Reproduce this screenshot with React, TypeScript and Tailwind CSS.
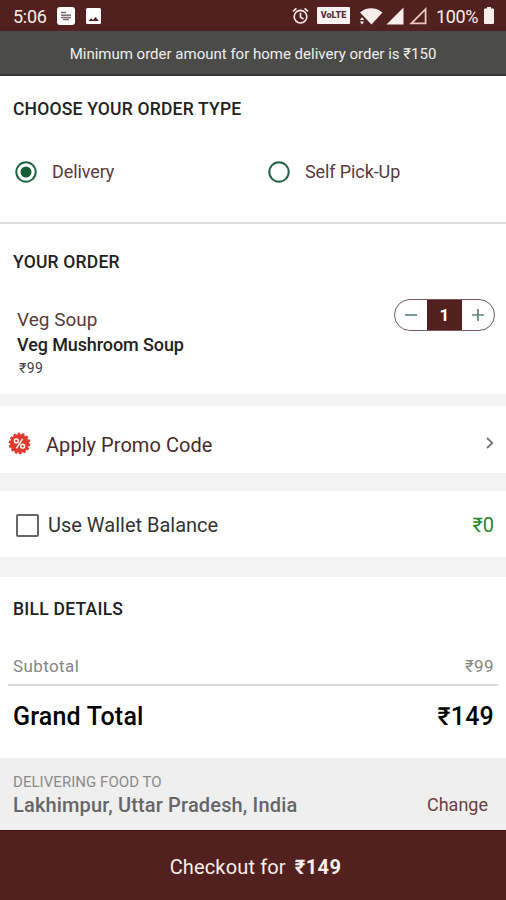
import React, { useState } from "react";

const OrderScreen: React.FunctionComponent = () => {
  return (
    <main className="flex h-[900px] w-[506px] flex-col overflow-hidden bg-[#f3f3f3] font-['Roboto',sans-serif] text-[#222]">
      <StatusBar />
      <div className="flex h-[45px] shrink-0 items-center justify-center border-b-2 border-[#353533] bg-[#4b4b49] pt-[4px] text-[15px] text-[#efefed]">
        Minimum order amount for home delivery order is ₹150
      </div>
      <OrderType />
      <OrderItems />
      <PromoRow />
      <WalletRow />
      <BillDetails />
      <Address />
      <button className="flex h-[70px] w-full shrink-0 items-center justify-center gap-[9px] border-t border-[#3c1210] bg-[#52201e] pt-[2px] pl-[5px] text-[20px] text-[#f8efeb]">
        <span className="tracking-[0.15px]">Checkout for</span>
        <span className="font-bold tracking-[0.4px]">₹149</span>
      </button>
    </main>
  );
};

export default OrderScreen;

const StatusBar: React.FunctionComponent = () => {
  return (
    <header className="flex h-[31px] shrink-0 items-center bg-[#52201e] pr-[12px] pl-[13px] text-[#f7eeeb]">
      <span className="w-[44px] pt-px text-[18px] tracking-[-0.3px]">5:06</span>
      <svg className="h-[18px] w-[18px]" viewBox="0 0 18 18">
        <rect width="18" height="18" rx="3" fill="#fff" />
        <path
          d="M4 5.5h5M4 8.2h10M4 10.5h10M6 12.4h6"
          stroke="#7e6c70"
          strokeWidth="1.5"
        />
      </svg>
      <svg className="ml-[11px] h-[16px] w-[15px]" viewBox="0 0 15 16">
        <rect width="15" height="16" rx="1.5" fill="#fff" />
        <path d="M2.5 13 5 10.3l2 1.7 2.6-3 3.2 4Z" fill="#52201e" />
      </svg>

      <div className="ml-auto flex items-center">
        <svg
          className="h-[18px] w-[17px]"
          viewBox="0 0 17 18"
          fill="none"
          stroke="currentColor"
          strokeWidth="1.6"
        >
          <circle cx="8.5" cy="9.7" r="6.3" />
          <path d="M8.5 5.8v4.3l3 1.9M1 4.3l3.4-2.9M16 4.3l-3.4-2.9" />
        </svg>
        <span className="ml-[8px] flex h-[17px] w-[33px] items-center justify-center rounded-[1px] bg-[#fbf4f2] text-[9px] font-black text-[#52303a]">
          VoLTE
        </span>
        <svg
          className="ml-[9px] h-[18px] w-[24px]"
          viewBox="0 0 24 18"
          fill="currentColor"
        >
          <path d="M1 5.5C7-.3 17-.3 23.5 5.5L12.5 17.5Z" />
          <path d="m3 10.3 2.2 2.7H.8ZM3 17.5.8 14.4h4.4Z" />
        </svg>
        <svg
          className="ml-[3px] h-[18px] w-[18px]"
          viewBox="0 0 18 18"
          fill="currentColor"
        >
          <path d="M17.5.5v17H.5Z" />
        </svg>
        <svg
          className="ml-[5px] h-[18px] w-[18px]"
          viewBox="0 0 18 18"
          fill="none"
          stroke="#e7c9bd"
          strokeWidth="1.8"
        >
          <path d="M16.6 2.2v14.2H2.4Z" />
        </svg>
        <span className="ml-[9px] w-[48px] pt-px text-[18px] tracking-[-0.4px]">
          100%
        </span>
        <svg
          className="h-[17px] w-[10px]"
          viewBox="0 0 10 17"
          fill="currentColor"
        >
          <path d="M3 0h4v1.6h2a1 1 0 0 1 1 1V16a1 1 0 0 1-1 1H1a1 1 0 0 1-1-1V2.600a1 1 0 0 1 1-1h2Z" />
        </svg>
      </div>
    </header>
  );
};

const OrderType: React.FunctionComponent = () => {
  const [type, setType] = useState("Delivery");

  return (
    <section className="h-[148px] shrink-0 border-b-2 border-[#dcdcdc] bg-white px-[13px] pt-[21px]">
      <h2 className="text-[17.5px] leading-6 font-medium tracking-[0.2px]">
        CHOOSE YOUR ORDER TYPE
      </h2>
      <div className="mt-[39px] flex">
        {["Delivery", "Self Pick-Up"].map((name) => (
          <button
            key={name}
            className="flex w-[253px] shrink-0 items-center gap-[15px] pl-[2px] text-left"
            onClick={() => setType(name)}
          >
            <svg className="h-[22px] w-[22px] shrink-0" viewBox="0 0 22 22">
              <circle
                cx="11"
                cy="11"
                r="9.7"
                fill="none"
                stroke="#236342"
                strokeWidth="2"
              />
              {type === name && <circle cx="11" cy="11" r="5.5" fill="#175c35" />}
            </svg>
            <span className="text-[18px] leading-6 tracking-[-0.1px] whitespace-nowrap text-[#5b3a3c]">
              {name}
            </span>
          </button>
        ))}
      </div>
    </section>
  );
};

const OrderItems: React.FunctionComponent = () => {
  const [count, setCount] = useState(1);

  return (
    <section className="h-[170px] shrink-0 bg-white pt-[26px] pr-[11px] pl-[13px]">
      <h2 className="text-[17.5px] leading-6 font-medium tracking-[0.2px]">
        YOUR ORDER
      </h2>
      <div className="mt-[25px] flex justify-between">
        <div className="pt-[9px] pl-[4px]">
          <p className="text-[19px] leading-6 text-[#5b3a3c]">Veg Soup</p>
          <p className="text-[18px] leading-[26px] font-medium tracking-[-0.1px]">
            Veg Mushroom Soup
          </p>
          <p className="pl-[2px] text-[14px] leading-5 tracking-[0.4px] text-[#444]">
            ₹99
          </p>
        </div>
        <div className="flex h-[32px] w-[101px] overflow-hidden rounded-full border border-[#765a5b]">
          <button
            title="Remove"
            className="flex flex-1 items-center justify-center"
            onClick={() => setCount(Math.max(0, count - 1))}
          >
            <svg className="h-3 w-3" viewBox="0 0 12 12">
              <path d="M0 6h12" stroke="#759b8b" strokeWidth="2" />
            </svg>
          </button>
          <span className="flex w-[35px] items-center justify-center bg-[#52201e] pt-px text-[17px] font-bold text-white">
            {count}
          </span>
          <button
            title="Add"
            className="flex flex-1 items-center justify-center"
            onClick={() => setCount(count + 1)}
          >
            <svg className="h-3 w-3" viewBox="0 0 12 12">
              <path d="M0 6h12M6 0v12" stroke="#5c8776" strokeWidth="1.7" />
            </svg>
          </button>
        </div>
      </div>
    </section>
  );
};

const PromoRow: React.FunctionComponent = () => {
  return (
    <section className="mt-[12px] flex h-[67px] shrink-0 items-center bg-white pt-[10px] pr-[12px] pl-[8px]">
      <svg className="mb-[3px] h-[23px] w-[23px]" viewBox="0 0 24 24">
        <circle
          cx="12"
          cy="12"
          r="10"
          fill="#e13b2d"
          stroke="#e13b2d"
          strokeWidth="2.6"
          strokeDasharray="2.6 1.89"
        />
        <g fill="none" stroke="#fff" strokeWidth="1.5">
          <circle cx="8.700" cy="9.3" r="2" />
          <circle cx="15.3" cy="14.8" r="2" />
          <path d="M15.3 7.2 8.7 17" />
        </g>
      </svg>
      <span className="ml-[15px] text-[20px] leading-6 tracking-[0.05px] text-[#4a292b]">
        Apply Promo Code
      </span>
      <svg
        className="mb-[3px] ml-auto h-[12px] w-[8px]"
        viewBox="0 0 8 12"
        fill="none"
        stroke="#777"
        strokeWidth="1.8"
      >
        <path d="m1 1 5.3 5L1 11" />
      </svg>
    </section>
  );
};

const WalletRow: React.FunctionComponent = () => {
  const [checked, setChecked] = useState(false);

  return (
    <section className="mt-[18px] flex h-[66px] shrink-0 items-center bg-white pt-[2px] pr-[12px] pl-[16px] text-[20px]">
      <button
        title="Use Wallet Balance"
        className="flex h-[23px] w-[23px] items-center justify-center rounded-[2px] border-2 border-[#666]"
        onClick={() => setChecked(!checked)}
      >
        {checked && <span className="h-3 w-3 bg-[#175c35]" />}
      </button>
      <span className="ml-[9px] leading-6 text-[#333]">Use Wallet Balance</span>
      <span className="ml-auto leading-6 text-[#29882d]">₹0</span>
    </section>
  );
};

const BillDetails: React.FunctionComponent = () => {
  return (
    <section className="mt-[20px] h-[181px] shrink-0 bg-white px-[8px] pt-[20px]">
      <h2 className="pl-[5px] text-[17.5px] leading-6 font-medium tracking-[0.25px]">
        BILL DETAILS
      </h2>
      <div className="mt-[33px] flex h-[32px] justify-between border-b-2 border-[#dadada] pr-[4px] pl-[5px] text-[17px] leading-6 tracking-[0.4px] text-[#858585]">
        <span>Subtotal</span>
        <span>₹99</span>
      </div>
      <div className="mt-[17px] flex justify-between pr-[4px] pl-[5px] text-[25px] leading-7 font-medium tracking-[0.2px] text-black">
        <span>Grand Total</span>
        <span>₹149</span>
      </div>
    </section>
  );
};

const Address: React.FunctionComponent = () => {
  return (
    <section className="flex h-[72px] shrink-0 items-end justify-between bg-[#efefef] pr-[18px] pb-[12px] pl-[13px]">
      <div>
        <p className="text-[15px] leading-5 tracking-[0.05px] text-[#8b8b8b]">
          DELIVERING FOOD TO
        </p>
        <p className="text-[20px] leading-[26px] font-medium tracking-[0.16px] text-[#666]">
          Lakhimpur, Uttar Pradesh, India
        </p>
      </div>
      <button className="text-[18px] leading-[26px] text-[#6c3e42]">
        Change
      </button>
    </section>
  );
};
